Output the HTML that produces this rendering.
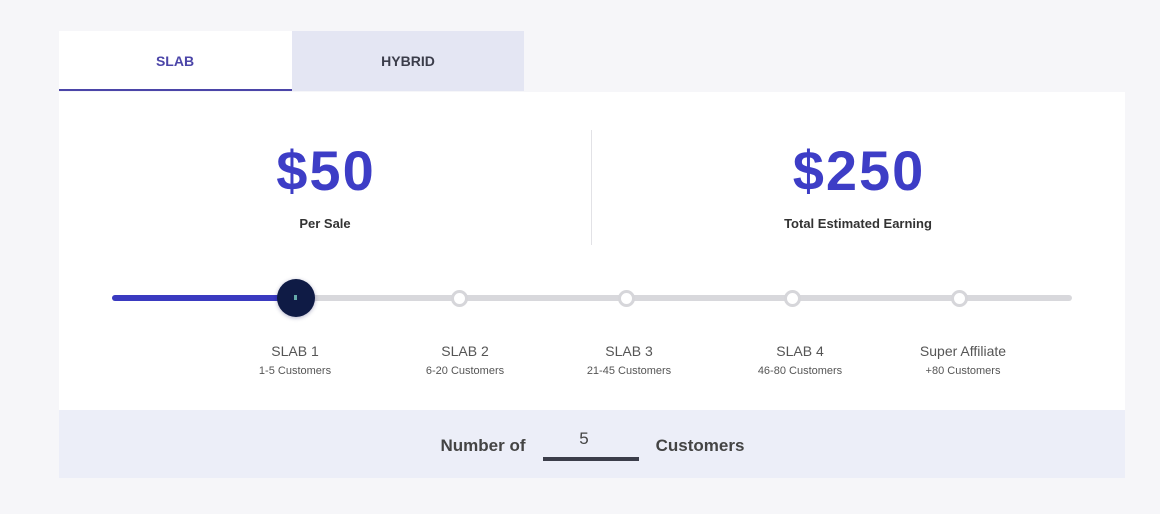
<!DOCTYPE html><html><head><style>
body{margin:0;width:1160px;height:514px;background:#f6f6f9;font-family:"Liberation Sans",sans-serif;position:relative;overflow:hidden}
div{position:absolute;box-sizing:border-box}
.c{transform:translateX(-50%);white-space:nowrap;text-align:center}
.n{border-radius:50%;width:17px;height:17px;background:#fff;border:3px solid #d6d6da;top:290px;margin-left:-8px}
.l{top:343px;font-size:14px;color:#555}
.s{top:365px;font-size:11px;color:#555}
.big{top:138px;font-size:56px;font-weight:bold;color:#3d3dc6;letter-spacing:2px}
</style></head><body>
<div style="left:59px;top:31px;width:233px;height:60px;background:#fff;border-bottom:2px solid #4b45a8"></div>
<div style="left:292px;top:31px;width:232px;height:60px;background:#e4e6f3"></div>
<div class="c" style="left:175px;top:53px;font-size:14px;font-weight:bold;color:#4b45a8">SLAB</div>
<div class="c" style="left:408px;top:53px;font-size:14px;font-weight:bold;color:#3b3d4a">HYBRID</div>
<div style="left:59px;top:92px;width:1066px;height:318px;background:#fff"></div>
<div style="left:59px;top:410px;width:1066px;height:68px;background:#eceef8"></div>
<div class="c big" style="left:326px">$50</div>
<div class="c" style="left:325px;top:216px;font-size:13px;font-weight:bold;color:#333">Per Sale</div>
<div style="left:591px;top:130px;width:1px;height:115px;background:#e2e2e6"></div>
<div class="c big" style="left:859px">$250</div>
<div class="c" style="left:858px;top:216px;font-size:13px;font-weight:bold;color:#333">Total Estimated Earning</div>
<div style="left:112px;top:295px;width:960px;height:6px;background:#d8d8dc;border-radius:3px"></div>
<div style="left:112px;top:295px;width:184px;height:6px;background:#3a3ac0;border-radius:3px"></div>
<div class="n" style="left:459px"></div><div class="n" style="left:626px"></div><div class="n" style="left:792px"></div><div class="n" style="left:959px"></div>
<div style="left:277px;top:279px;width:38px;height:38px;border-radius:50%;background:#0f1b45;box-shadow:0 1px 4px rgba(0,0,80,.3)"></div>
<div style="left:294px;top:295px;width:3px;height:5px;background:#6aa;"></div>
<div class="c l" style="left:295px">SLAB 1</div><div class="c s" style="left:295px">1-5 Customers</div>
<div class="c l" style="left:465px">SLAB 2</div><div class="c s" style="left:465px">6-20 Customers</div>
<div class="c l" style="left:629px">SLAB 3</div><div class="c s" style="left:629px">21-45 Customers</div>
<div class="c l" style="left:800px">SLAB 4</div><div class="c s" style="left:800px">46-80 Customers</div>
<div class="c l" style="left:963px">Super Affiliate</div><div class="c s" style="left:963px">+80 Customers</div>
<div class="c" style="left:483px;top:436px;font-size:17px;font-weight:bold;color:#444">Number of</div>
<div class="c" style="left:584px;top:429px;font-size:17px;color:#444">5</div>
<div style="left:543px;top:457px;width:96px;height:4px;background:#3b3d4a"></div>
<div class="c" style="left:700px;top:436px;font-size:17px;font-weight:bold;color:#444">Customers</div>
</body></html>
